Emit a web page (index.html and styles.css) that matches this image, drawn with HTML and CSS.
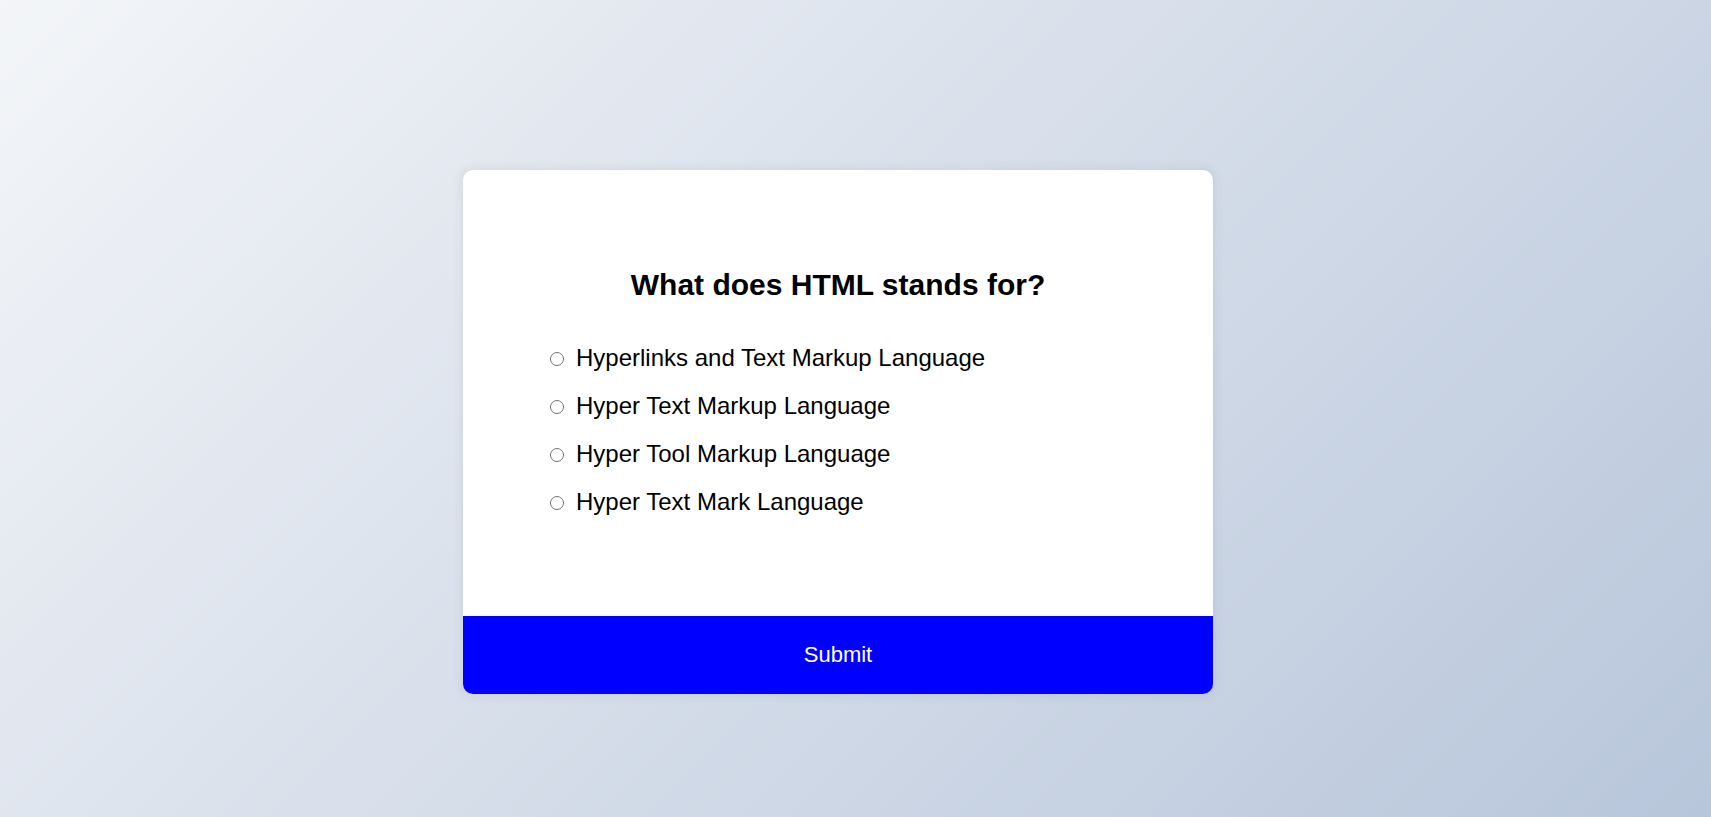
FILE: index.html
```html
<!DOCTYPE html>
<html lang="en">
<head>
<meta charset="UTF-8">
<title>Quiz</title>
<link rel="stylesheet" href="styles.css">
</head>
<body>
  <div class="quiz-container">
    <div class="quiz-header">
      <h2 class="question">What does HTML stands for?</h2>
      <ul class="answers">
        <li class="answer"><input type="radio" name="answer" id="a" class="radio"><label for="a">Hyperlinks and Text Markup Language</label></li>
        <li class="answer"><input type="radio" name="answer" id="b" class="radio"><label for="b">Hyper Text Markup Language</label></li>
        <li class="answer"><input type="radio" name="answer" id="c" class="radio"><label for="c">Hyper Tool Markup Language</label></li>
        <li class="answer"><input type="radio" name="answer" id="d" class="radio"><label for="d">Hyper Text Mark Language</label></li>
      </ul>
    </div>
    <button class="submit">Submit</button>
  </div>
</body>
</html>
```
FILE: styles.css
```css
* { box-sizing: border-box; }
html, body { margin: 0; }
body {
  height: 817px;
  padding: 47px 35px 0 0;
  display: flex;
  align-items: center;
  justify-content: center;
  background: #b8c6db;
  background-image: linear-gradient(315deg, #b8c6db 0%, #f3f5f8 100%);
  font-family: "Liberation Sans", Arial, sans-serif;
  color: #000;
  overflow: hidden;
}
.quiz-container {
  width: 750px;
  background: #fff;
  border-radius: 10px;
  box-shadow: 0 0 10px 2px rgba(100, 100, 100, 0.1);
  overflow: hidden;
}
.quiz-header {
  padding: 98px 0 100px;
}
.question {
  margin: 0 0 42px;
  font-size: 30px;
  line-height: 34px;
  font-weight: bold;
  text-align: center;
}
.answers {
  list-style: none;
  margin: 0;
  padding: 0 0 0 87px;
  display: flex;
  flex-direction: column;
  gap: 20px;
}
.answer {
  display: flex;
  align-items: center;
  font-size: 24px;
  line-height: 28px;
  height: 28px;
}
.radio {
  margin: 1px 12px 0 0;
  width: 14px;
  height: 14px;
}
.submit {
  display: block;
  width: 100%;
  border: none;
  background: #0000ff;
  color: #fff;
  font-family: inherit;
  font-size: 22px;
  line-height: 26px;
  padding: 26px 0;
  cursor: pointer;
}
```
